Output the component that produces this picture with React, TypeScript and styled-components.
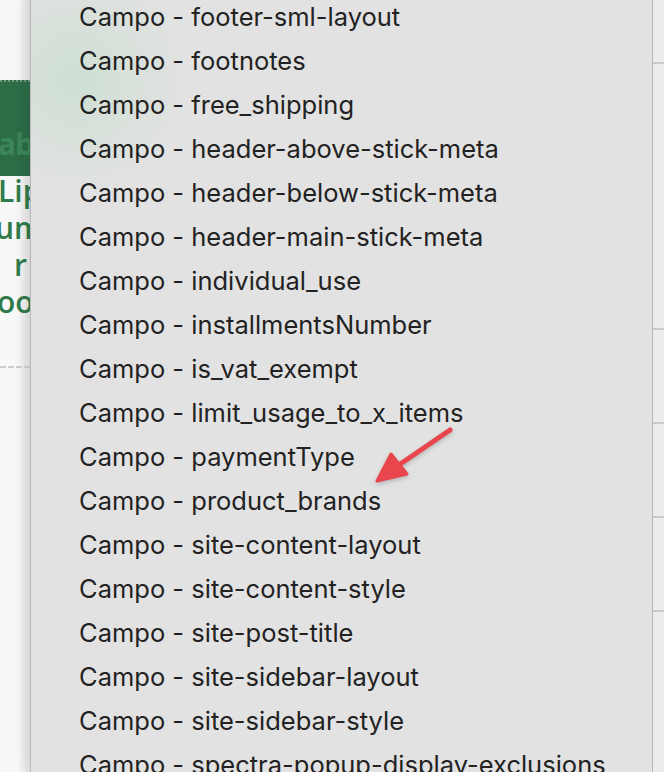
import styled, { createGlobalStyle } from "styled-components";

const GlobalStyle = createGlobalStyle`
  html, body {
    margin: 0;
    padding: 0;
    background: #f6f6f6;
  }
  body {
    width: 664px;
    height: 772px;
    overflow: hidden;
  }
`;

const fields = [
  "footer-sml-layout",
  "footnotes",
  "free_shipping",
  "header-above-stick-meta",
  "header-below-stick-meta",
  "header-main-stick-meta",
  "individual_use",
  "installmentsNumber",
  "is_vat_exempt",
  "limit_usage_to_x_items",
  "paymentType",
  "product_brands",
  "site-content-layout",
  "site-content-style",
  "site-post-title",
  "site-sidebar-layout",
  "site-sidebar-style",
  "spectra-popup-display-exclusions",
];

// page headline peeking out from under the menu
const headline = [
  { text: "Lip", indent: -2 },
  { text: "um", indent: -5 },
  { text: "r", indent: 14 },
  { text: "oog", indent: -3 },
];

const rightRules = [62, 328, 422, 516, 610];

const App = () => {
  return (
    <>
      <GlobalStyle />
      <Screen>
        <PageEdge>
          <TopBlank />
          <Banner>
            <BannerText>ab</BannerText>
          </Banner>
          <Headline>
            {headline.map((line) => (
              <HeadlineLine key={line.text} $indent={line.indent}>
                {line.text}
              </HeadlineLine>
            ))}
          </Headline>
          <DashedRule />
        </PageEdge>

        <Menu>
          {fields.map((field) => (
            <MenuItem key={field}>Campo - {field}</MenuItem>
          ))}
        </Menu>

        <PageSide>
          {rightRules.map((y) => (
            <SideRule key={y} style={{ top: y }} />
          ))}
        </PageSide>

        <Arrow width="100" height="70" viewBox="0 0 100 70">
          <line
            x1="93"
            y1="5"
            x2="36"
            y2="44"
            stroke="#e8464c"
            strokeWidth="5"
            strokeLinecap="round"
          />
          <polygon
            points="20,56 34,29 50,49"
            fill="#e8464c"
            stroke="#e8464c"
            strokeWidth="3"
            strokeLinejoin="round"
          />
        </Arrow>
      </Screen>
    </>
  );
};

const Screen = styled.div`
  position: relative;
  display: flex;
  width: 664px;
  height: 772px;
  overflow: hidden;
  font-family: Inter, "Noto Sans", sans-serif;
`;

const PageEdge = styled.div`
  width: 30px;
  flex-shrink: 0;
  display: flex;
  flex-direction: column;
  background: linear-gradient(to right, #f8f8f8 60%, #e6e6e6 100%);
  overflow: hidden;
`;

const TopBlank = styled.div`
  height: 80px;
  flex-shrink: 0;
`;

const Banner = styled.div`
  height: 96px;
  flex-shrink: 0;
  background: #2c6c47;
  border-top: 2px dotted #6f9a7e;
  display: flex;
  align-items: flex-end;
  padding-bottom: 12px;
  box-sizing: border-box;
`;

const BannerText = styled.div`
  font-family: "Open Sans", sans-serif;
  font-weight: 700;
  font-size: 30px;
  color: #3c8658;
  margin-left: -2px;
  letter-spacing: -1px;
`;

const Headline = styled.div`
  display: flex;
  flex-direction: column;
  font-family: "Open Sans", sans-serif;
  font-weight: 600;
  font-size: 30px;
  line-height: 37px;
  color: #2f7b4b;
  margin-top: -4px;
  white-space: nowrap;
`;

const HeadlineLine = styled.div<{ $indent: number }>`
  padding-left: ${({ $indent }) => Math.max($indent, 0)}px;
  margin-left: ${({ $indent }) => Math.min($indent, 0)}px;
`;

const DashedRule = styled.div`
  margin-top: 46px;
  border-top: 2px dashed #cfcfcf;
`;

const Menu = styled.div`
  flex: 1;
  display: flex;
  flex-direction: column;
  margin-top: -6px;
  overflow: hidden;
  background:
    radial-gradient(circle at 45px 85px, rgba(198, 222, 205, 0.7) 0, rgba(226, 226, 226, 0) 115px),
    #e2e2e2;
  border-left: 1px solid #b9b9b9;
  border-right: 1px solid #b9b9b9;
  box-shadow: -6px 0 12px rgba(0, 0, 0, 0.08);
`;

const MenuItem = styled.div`
  height: 44px;
  flex-shrink: 0;
  display: flex;
  align-items: center;
  padding-left: 48px;
  font-size: 25.5px;
  color: #222222;
  white-space: nowrap;
`;

const PageSide = styled.div`
  position: relative;
  width: 11px;
  flex-shrink: 0;
  background: #ececec;
`;

const SideRule = styled.div`
  position: absolute;
  left: 0;
  right: 0;
  height: 2px;
  background: #c9c9c9;
`;

const Arrow = styled.svg`
  position: absolute;
  left: 357px;
  top: 425px;
  filter: drop-shadow(0 2px 2px rgba(0, 0, 0, 0.2));
`;

export default App;
